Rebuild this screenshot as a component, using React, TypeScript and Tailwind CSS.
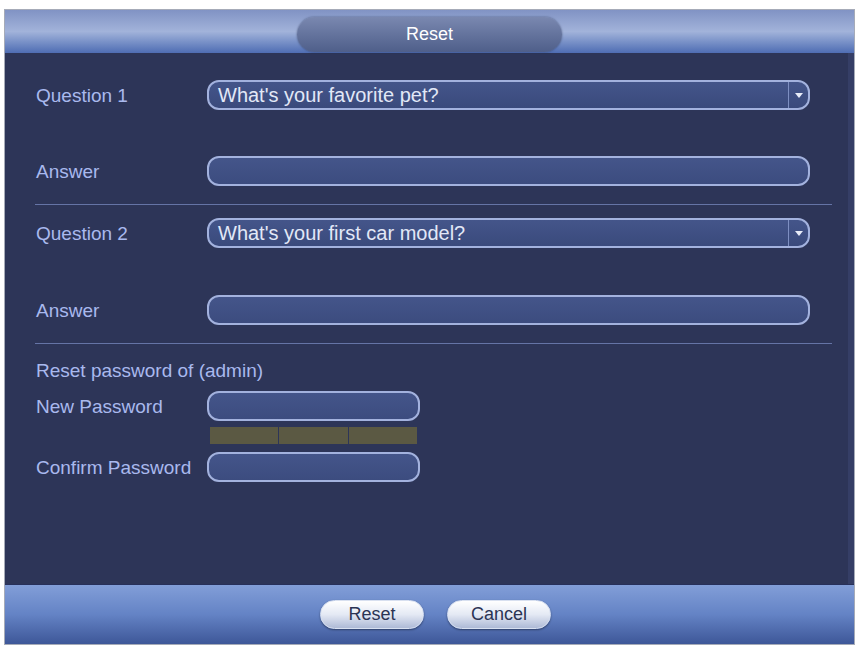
import { ReactNode } from "react";

const font = { fontFamily: '"Liberation Sans", Arial, sans-serif' };

function Label({ children }: { children: ReactNode }) {
  return <div className="w-[171px] shrink-0 text-[19px] leading-none text-[#a9b9ee]">{children}</div>;
}

function Select({ value }: { value: string }) {
  return (
    <div className="flex h-[30px] w-[603px] items-stretch overflow-hidden rounded-[12px] border-2 border-[#a3b2de] bg-gradient-to-b from-[#44558a] to-[#3a4a7c]">
      <div className="flex flex-1 items-center pl-[9px] text-[20px] leading-none text-[#e2e8f7]">{value}</div>
      <div className="flex w-[20px] items-center justify-center border-l border-[#7e8fc2]">
        <svg width="8" height="5" viewBox="0 0 8 5">
          <path d="M0 0H8L4 5Z" fill="#e8ecf8" />
        </svg>
      </div>
    </div>
  );
}

function Input({ wide }: { wide?: boolean }) {
  return (
    <div
      className={`h-[30px] ${wide ? "w-[603px]" : "w-[213px]"} rounded-[12px] border-2 border-[#a3b2de] bg-gradient-to-b from-[#44558a] to-[#3c4c7f]`}
    />
  );
}

function Divider() {
  return <div className="-ml-px h-px w-[797px] bg-[#6574a6]" />;
}

function PillButton({ children }: { children: ReactNode }) {
  return (
    <button className="flex h-[29px] w-[104px] items-center justify-center rounded-full border border-[#d8e0f0] bg-gradient-to-b from-[#ffffff] via-[#e4e9f4] to-[#aebad6] text-[18px] text-[#2b3454] shadow-[0_1px_2px_rgba(0,0,0,0.4)]">
      {children}
    </button>
  );
}

export default function App() {
  return (
    <div className="h-[648px] w-[859px] bg-white pl-[4px] pt-[9px]" style={font}>
      <div className="flex h-[636px] w-[851px] flex-col border border-[#a6abb8]">
        {/* header */}
        <div className="relative flex h-[43px] items-center justify-center bg-gradient-to-b from-[#8193c4] via-[#a2b3da] to-[#4f6db3]">
          <div className="mt-[6px] flex h-[35px] w-[265px] items-center justify-center rounded-full bg-gradient-to-b from-[#7a88b0] to-[#4f5f8a] text-[18px] text-white shadow-[0_0_2px_rgba(30,40,70,0.6)]">
            Reset
          </div>
        </div>

        {/* body */}
        <div className="flex flex-1 flex-col border-r-[6px] border-[#353e66] bg-[#2d3558] pl-[31px] pt-[27px]">
          <div className="flex h-[30px] items-center">
            <Label>Question 1</Label>
            <Select value="What's your favorite pet?" />
          </div>
          <div className="mt-[46px] flex h-[30px] items-center">
            <Label>Answer</Label>
            <Input wide />
          </div>
          <div className="mt-[18px]">
            <Divider />
          </div>
          <div className="mt-[13px] flex h-[30px] items-center">
            <Label>Question 2</Label>
            <Select value="What's your first car model?" />
          </div>
          <div className="mt-[47px] flex h-[30px] items-center">
            <Label>Answer</Label>
            <Input wide />
          </div>
          <div className="mt-[18px]">
            <Divider />
          </div>
          <div className="mt-[17px] text-[19px] leading-[20px] text-[#a9b9ee]">Reset password of (admin)</div>
          <div className="mt-[10px] flex h-[30px] items-center">
            <Label>New Password</Label>
            <Input />
          </div>
          <div className="ml-[174px] mt-[6px] flex h-[17px] w-[207px] gap-px">
            <div className="flex-1 bg-[#5b5943]" />
            <div className="flex-1 bg-[#5b5943]" />
            <div className="flex-1 bg-[#5b5943]" />
          </div>
          <div className="mt-[8px] flex h-[30px] items-center">
            <Label>Confirm Password</Label>
            <Input />
          </div>
        </div>

        {/* footer */}
        <div className="flex h-[60px] items-center justify-center gap-[23px] border-t border-[#27305a] bg-gradient-to-b from-[#829ed8] via-[#6483c5] to-[#3e5798] pl-[12px]">
          <PillButton>Reset</PillButton>
          <PillButton>Cancel</PillButton>
        </div>
      </div>
    </div>
  );
}
